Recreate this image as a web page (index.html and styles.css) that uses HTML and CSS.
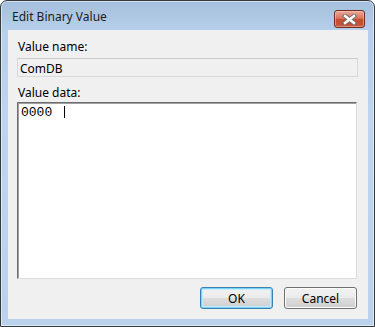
FILE: index.html
```html
<!DOCTYPE html>
<html lang="en">
<head>
    <meta charset="UTF-8">
    <title>Edit Binary Value</title>
    <link rel="stylesheet" href="styles.css">
</head>
<body>
    <div class="window">
        <div class="titlebar">
            <span class="title">Edit Binary Value</span>
            <button class="close-btn">
                <svg width="15" height="11" viewBox="0 0 15 11">
                    <path d="M3 2 L12 9 M12 2 L3 9" stroke="#6b6b6b" stroke-width="4.2" stroke-linecap="square"/>
                    <path d="M3 2 L12 9 M12 2 L3 9" stroke="#ffffff" stroke-width="2.4" stroke-linecap="square"/>
                </svg>
            </button>
        </div>
        <div class="client">
            <label class="field-label">Value name:</label>
            <div class="name-box">ComDB</div>
            <label class="field-label data-label">Value data:</label>
            <div class="data-box">
                <span class="hex">0000</span><span class="caret"></span>
            </div>
            <div class="button-row">
                <button class="btn btn-default">OK</button>
                <button class="btn">Cancel</button>
            </div>
        </div>
    </div>
</body>
</html>
```
FILE: styles.css
```css
*{
  box-sizing:border-box;
}
body{
  margin:0;
  background:#ffffff;
  font-family:"Noto Sans", "Liberation Sans", sans-serif;
  font-size:12px;
  color:#000;
}
.window{
  width:375px;
  height:327px;
  border:1px solid #3a3a3a;
  border-radius:7px 7px 0 0;
  background:linear-gradient(#a5bfdc, #b6cfea 30px, #bdd5ef 120px, #bad2ec);
  box-shadow:inset 0 0 0 1px rgba(235,250,255,.6);
  padding:0 6px 7px 7px;
  display:flex;
  flex-direction:column;
}
.titlebar{
  height:29px;
  display:flex;
  align-items:center;
  justify-content:space-between;
  padding:0 3px 0 4px;
}
.title{
  color:#1b1b1b;
  font-size:12px;
  margin-top:2px;
}
.close-btn{
  width:31px;
  height:18px;
  margin-top:7px;
  border:1px solid #6f2c22;
  border-radius:3px;
  background:linear-gradient(#e9aa98, #d9755f 45%, #c24a31 55%, #c9583c);
  box-shadow:inset 0 0 0 1px rgba(255,210,200,.45);
  display:flex;
  align-items:center;
  justify-content:center;
  padding:0;
}
.client{
  flex:1;
  background:#f0f0f0;
  padding:8px 10px 0 9px;
  display:flex;
  flex-direction:column;
}
.field-label{
  display:block;
  height:19px;
  padding-left:1px;
}
.name-box{
  height:19px;
  border:1px solid #d9d9d9;
  border-top-color:#cacaca;
  background:#f0f0f0;
  padding:1px 2px;
  margin-top:1px;
}
.data-label{
  margin-top:7px;
}
.data-box{
  height:177px;
  width:340px;
  margin-top:-1px;
  background:#fff;
  border:1px solid #dcdcdc;
  border-top-color:#6d6d6d;
  border-left-color:#6d6d6d;
  box-shadow:inset 1px 1px 0 #a0a0a0;
  padding:3px 0 0 3px;
  font-family:"Liberation Mono", monospace;
  font-size:13px;
  line-height:13px;
  display:flex;
  align-items:flex-start;
}
.caret{
  display:inline-block;
  width:1px;
  height:12px;
  background:#000;
  margin-left:12px;
}
.button-row{
  display:flex;
  justify-content:flex-end;
  gap:11px;
  margin-top:8px;
  padding-right:1px;
}
.btn{
  width:73px;
  height:22px;
  border:1px solid #707070;
  border-radius:3px;
  background:linear-gradient(#f2f2f2, #ebebeb 48%, #dddddd 52%, #cfcfcf);
  box-shadow:inset 0 0 0 1px #fcfcfc;
  font-family:"Noto Sans", "Liberation Sans", sans-serif;
  font-size:12px;
  color:#000;
  padding:0;
}
.btn-default{
  border-color:#3c7fb1;
  box-shadow:inset 0 0 0 1px #7ad3f7, inset 0 0 0 2px #c6ecfb;
}
```
